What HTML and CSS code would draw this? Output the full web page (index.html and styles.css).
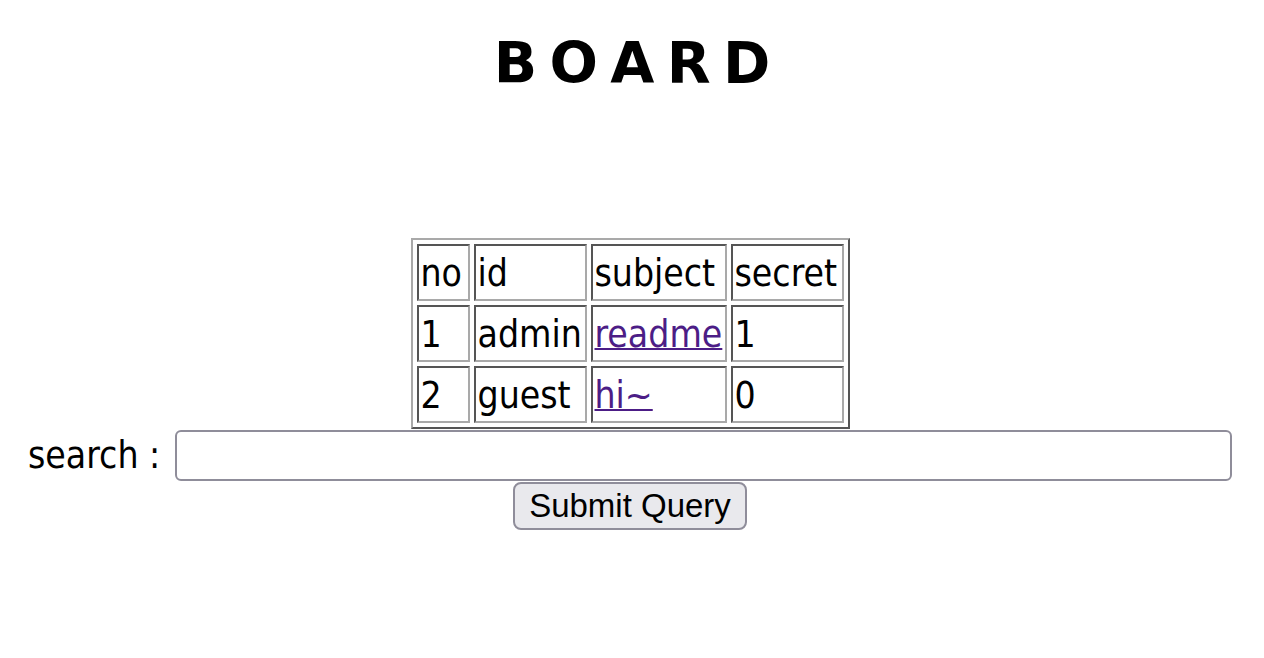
FILE: index.html
```html
<!DOCTYPE html>
<html>
<head>
<meta charset="utf-8">
<title>BOARD</title>
<link rel="stylesheet" href="styles.css">
</head>
<body>
<h1 class="title">B O A R D</h1>
<div class="board-wrap">
  <table class="board">
    <colgroup>
      <col class="c-no">
      <col class="c-id">
      <col class="c-subject">
      <col class="c-secret">
    </colgroup>
    <tr><td>no</td><td>id</td><td>subject</td><td>secret</td></tr>
    <tr><td>1</td><td>admin</td><td><a href="#">readme</a></td><td>1</td></tr>
    <tr><td>2</td><td>guest</td><td><a href="#">hi~</a></td><td>0</td></tr>
  </table>
</div>
<form class="search-form">
  <div class="search-row">
    <label class="search-label" for="q">search :</label>
    <input class="search-input" id="q" type="text">
  </div>
  <div class="submit-row">
    <button class="submit-btn" type="submit">Submit Query</button>
  </div>
</form>
</body>
</html>
```
FILE: styles.css
```css
html, body {
  margin: 0;
  padding: 0;
  background: #ffffff;
}
body {
  font-family: "DejaVu Sans Condensed", "DejaVu Sans", sans-serif;
  font-stretch: condensed;
  color: #000;
  width: 1264px;
}
.title {
  margin: 0;
  padding-top: 30px;
  height: 238px;
  box-sizing: border-box;
  text-align: center;
  font-family: "DejaVu Sans", sans-serif;
  font-stretch: normal;
  font-weight: bold;
  font-size: 57px;
  line-height: 66px;
  word-spacing: -7.5px;
}
.board-wrap {
  display: flex;
  justify-content: center;
  padding-right: 4px;
}
.board {
  border-collapse: separate;
  border-spacing: 4px;
  border: 2px solid;
  border-color: #a9a9a9 #555555 #555555 #a9a9a9;
  font-size: 37px;
}
.board td {
  border: 2px solid;
  border-color: #555555 #a9a9a9 #a9a9a9 #555555;
  padding: 3px 2px 1px 2px;
  height: 49px;
  line-height: 49px;
  white-space: nowrap;
  vertical-align: middle;
}
.c-no { width: 53px; }
.c-id { width: 113px; }
.c-subject { width: 136px; }
.c-secret { width: 113px; }
.board a {
  color: #4c1d86;
  text-decoration: underline;
  text-decoration-thickness: 2px;
}
.search-form {
  margin: 1px 0 0 0;
}
.search-row {
  display: flex;
  align-items: center;
  padding-left: 28px;
}
.search-label {
  flex: 0 0 147px;
  font-size: 37px;
  line-height: 51px;
}
.search-input {
  flex: 0 0 1057px;
  box-sizing: border-box;
  height: 51px;
  margin: 0;
  border: 2px solid #8f8d9a;
  border-radius: 6px;
  background: #fff;
  padding: 0 8px;
  font-size: 26px;
}
.submit-row {
  display: flex;
  justify-content: center;
  padding-right: 4px;
  margin-top: 1px;
}
.submit-btn {
  box-sizing: border-box;
  width: 234px;
  height: 48px;
  margin: 0;
  padding: 0;
  background: #e9e9ed;
  border: 2px solid #8f8d9a;
  border-radius: 8px;
  font-family: "Liberation Sans", Arial, sans-serif;
  font-size: 33px;
  color: #000;
}
```
